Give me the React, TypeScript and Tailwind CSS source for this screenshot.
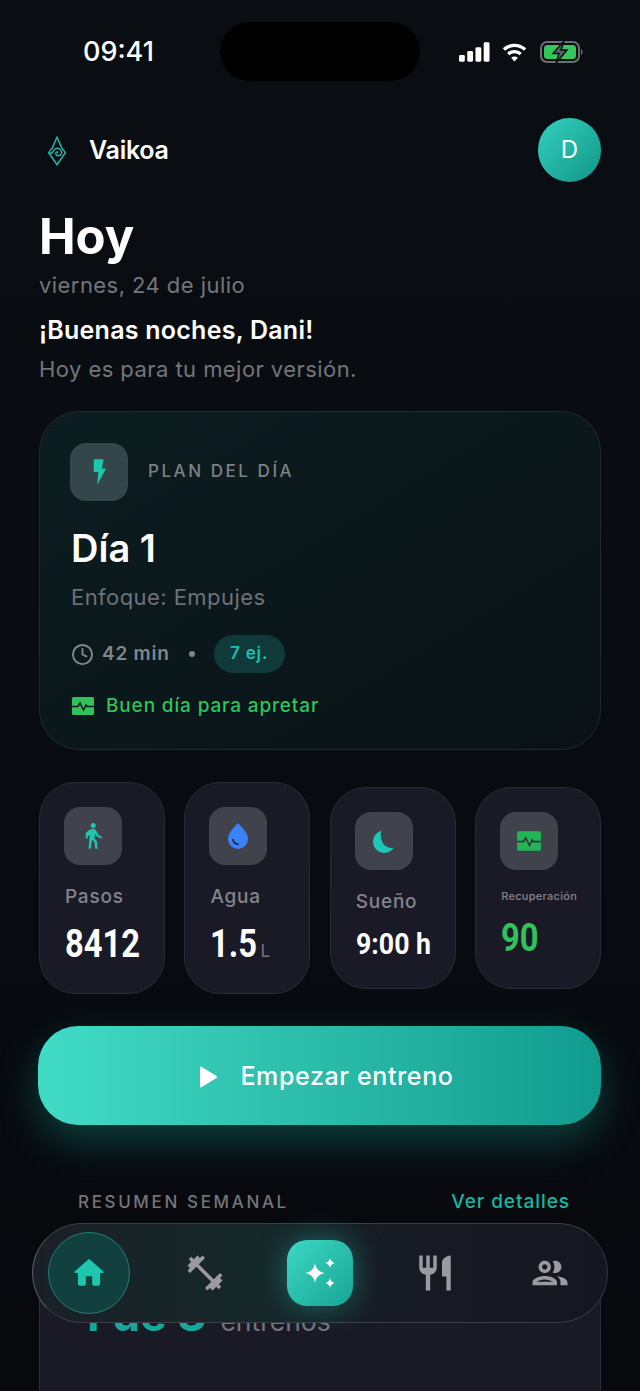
import { Clock } from "lucide-react";

const inter = "font-['Inter',sans-serif]";

const BoltIcon = ({ className }: { className?: string }) => (
	<svg viewBox="0 0 24 24" className={className} fill="currentColor">
		<path d="M7.500 1h8.500l-1.500 8h3.500L10.500 23l1-11H7.500z" />
	</svg>
);

const PulseIcon = ({ className, line = "#0d2024" }: { className?: string; line?: string }) => (
	<svg viewBox="0 0 24 24" className={className}>
		<rect x="1" y="3" width="22" height="18" rx="1.500" fill="currentColor" />
		<path d="M1 12.500h6l2-3.500 3.500 7 2.500-5 1 1.500h7" fill="none" stroke={line} strokeWidth="1.600" />
	</svg>
);

const Logo = () => (
	<svg viewBox="0 0 24 36" className="h-[30px] w-[20px] text-[#1cb8a8]" fill="none" stroke="currentColor" strokeWidth="1.800">
		<path d="M12 1.500L17.500 14 22 20 12 34.500 2 20 6.500 14z" />
		<path d="M2 20c3 1.500 5 .5 6-2.500 1-2.500 4.500-3.500 7-2 3 1.500 3.500 5.500 1 7.500-2.500 1.500-5.500.5-5.500-2 0-1.500 1.800-2.300 3-1.300" />
	</svg>
);

const WalkIcon = () => (
	<svg viewBox="0 0 24 24" className="-translate-x-[1px] h-[30px] w-[30px] text-[#1cc7ae]" fill="currentColor">
		<circle cx="13" cy="3.500" r="2" />
		<path d="M10 7l3-1 2 1 2 4 3 1.500-.6 1.400-3.700-1.800-1.200-2-.6 3.800 2 2.200.6 6h-1.900l-.6-5.200-2-2-1 7.200H9.200l1-11-1.600.9V14H7V9.600z" />
	</svg>
);

const DropIcon = () => (
	<svg viewBox="0 0 24 24" className="h-[30px] w-[30px]">
		<path d="M12 1.500c4 4.600 8 8 8 12.900a8 8 0 0 1-16 0C4 9.500 8 6.100 12 1.500z" fill="#3b82f6" />
		<path d="M8 15c.4 2 1.800 3.300 4 3.600" fill="none" stroke="#1c1f33" strokeWidth="1.300" strokeLinecap="round" />
	</svg>
);

const MoonIcon = () => (
	<svg viewBox="0 0 24 24" className="-translate-x-[1px] h-[27px] w-[27px] text-[#1cc7b5]" fill="currentColor">
		<path d="M11 2.500A10 10 0 1 0 22 17.500C15 19 8.500 12 11 2.500z" />
	</svg>
);

const HomeIcon = () => (
	<svg viewBox="0 0 24 24" className="h-[38px] w-[38px] text-[#1cc7ae]" fill="currentColor">
		<path d="M10 19v-5h4v5c0 .55.45 1 1 1h3c.55 0 1-.45 1-1v-7h1.700c.46 0 .68-.57.33-.87L12.670 3.600c-.38-.34-.96-.34-1.340 0l-8.360 7.530c-.34.3-.13.87.33.87H5v7c0 .55.45 1 1 1h3c.55 0 1-.45 1-1z" />
	</svg>
);

const DumbbellIcon = () => (
	<svg viewBox="0 0 24 24" className="h-[42px] w-[42px] text-[#9a9aa0]" fill="currentColor">
		<path d="M20.570 14.860L22 13.430 20.570 12 17 15.570 8.430 7 12 3.430 10.570 2 9.140 3.430 7.710 2 5.570 4.140 4.140 2.710 2.710 4.140l1.430 1.430L2 7.710l1.430 1.430L2 10.570 3.430 12 7 8.430 15.570 17 12 20.570 13.430 22l1.430-1.430L16.290 22l2.140-2.140 1.430 1.430 1.430-1.430-1.430-1.430L22 16.290z" />
	</svg>
);

const ForkKnifeIcon = () => (
	<svg viewBox="0 0 24 24" className="h-[42px] w-[42px] text-[#9a9aa0]" fill="currentColor">
		<path d="M11 9H9V2H7v7H5V2H3v7c0 2.120 1.660 3.840 3.750 3.970V22h2.500v-9.030C11.340 12.840 13 11.120 13 9V2h-2v7zm5-3v8h2.500v8H21V2c-2.760 0-5 2.240-5 4z" />
	</svg>
);

const PeopleIcon = () => (
	<svg viewBox="0 0 24 24" className="h-[42px] w-[42px] text-[#9a9aa0]" fill="currentColor">
		<path d="M9 13.750c-2.340 0-7 1.170-7 3.500V19h14v-1.750c0-2.330-4.660-3.500-7-3.500zM4.340 17c.84-.58 2.870-1.250 4.660-1.250s3.820.67 4.660 1.250H4.340zM9 12c1.930 0 3.500-1.570 3.500-3.500S10.930 5 9 5 5.500 6.570 5.500 8.500 7.070 12 9 12zm0-5c.83 0 1.500.67 1.500 1.500S9.830 10 9 10s-1.500-.67-1.500-1.500S8.170 7 9 7zm7.040 6.810c1.160.84 1.960 1.960 1.960 3.440V19h4v-1.750c0-2.020-3.500-3.170-5.960-3.440zM15 12c1.930 0 3.500-1.570 3.500-3.500S16.930 5 15 5c-.54 0-1.040.13-1.500.35.63.89 1 1.980 1 3.150s-.37 2.260-1 3.150c.46.22.96.35 1.500.35z" />
	</svg>
);

const SparkIcon = () => (
	<svg viewBox="0 0 36 36" className="h-[36px] w-[36px] text-white" fill="currentColor">
		<path d="M13 8.500Q14.500 16.500 22.500 18 14.500 19.500 13 27.500 11.500 19.500 3.500 18 11.500 16.500 13 8.500z" />
		<path d="M28 3Q28.800 7.200 33 8 28.800 8.800 28 13 27.200 8.800 23 8 27.200 7.200 28 3z" />
		<path d="M28 23Q28.800 27.200 33 28 28.800 28.800 28 33 27.200 28.800 23 28 27.200 27.200 28 23z" />
	</svg>
);

const StatCard = ({
	icon,
	label,
	labelClass,
	valueClass,
	children,
	tall,
}: {
	icon: React.ReactNode;
	label: string;
	labelClass: string;
	valueClass: string;
	children: React.ReactNode;
	tall?: boolean;
}) => (
	<div className={`flex-1 rounded-[36px] border border-[#2a2b36] bg-[#1a1a27] pl-[25px] pt-[24px] ${tall ? "h-[212px]" : "h-[202px]"}`}>
		<div className="-ml-[1px] flex h-[58px] w-[58px] items-center justify-center rounded-[16px] bg-[#40434c]">{icon}</div>
		<div className={`font-medium text-[#84848c] ${labelClass}`}>{label}</div>
		<div className={`flex items-baseline whitespace-nowrap font-['Roboto',sans-serif] font-bold leading-[44px] ${valueClass}`}>{children}</div>
	</div>
);

export default function App() {
	return (
		<div className={`relative h-[1391px] w-[640px] overflow-hidden bg-gradient-to-b from-[#0a0e13] to-[#07090d] text-white ${inter}`}>
			{/* status bar */}
			<div className="flex h-[118px] items-start justify-between px-[83px] pt-[22px]">
				<div className="pt-[13px] text-[27px] font-medium leading-[34px]">09:41</div>
				<div className="absolute left-[220px] top-[22px] h-[59px] w-[200px] rounded-[30px] bg-black" />
				<div className="-mr-[27px] flex items-center pt-[19px]">
					<svg viewBox="0 0 32 20" className="h-[20px] w-[31px] text-white" fill="currentColor">
						<rect x="0" y="13" width="6" height="7" rx="1.500" />
						<rect x="8.500" y="9" width="6" height="11" rx="1.500" />
						<rect x="17" y="5" width="6" height="15" rx="1.500" />
						<rect x="25.500" y="0" width="6" height="20" rx="1.500" />
					</svg>
					<svg viewBox="0 0 26 20" className="ml-[12px] h-[20px] w-[25px] text-white" fill="none" stroke="currentColor" strokeWidth="3.500">
						<path d="M2 7.500a16 16 0 0 1 22 0" />
						<path d="M6.500 12a10 10 0 0 1 13 0" />
						<path d="M13 20l-3.500-4a5 5 0 0 1 7 0z" fill="currentColor" stroke="none" />
					</svg>
					<svg viewBox="0 0 44 22" className="ml-[13px] h-[22px] w-[44px]">
						<rect x="1" y="1" width="38" height="20" rx="6" fill="none" stroke="#6b6f72" strokeWidth="2" />
						<rect x="4" y="4" width="32" height="14" rx="3.500" fill="#35c759" />
						<path d="M41 8c2 .5 2 5.500 0 6z" fill="#6b6f72" />
						<path d="M24 0L13 12.500h6L16 22l11-13h-6z" fill="#5c6062" stroke="#0a0d12" strokeWidth="1.500" />
					</svg>
				</div>
			</div>

			<div className="px-[39px]">
				{/* header */}
				<div className="flex h-[64px] items-center justify-between">
					<div className="flex items-center gap-[22px] pl-[8px] pt-[1px]">
						<Logo />
						<span className="text-[25px] font-semibold tracking-[-0.01em]">Vaikoa</span>
					</div>
					<div className="flex h-[64px] w-[63px] items-center justify-center rounded-full bg-gradient-to-br from-[#34d1bf] to-[#0f9688] text-[24px] font-normal">
						D
					</div>
				</div>

				<h1 className="mt-[26px] text-[49px] font-bold leading-[58px]">Hoy</h1>
				<p className="mt-[5px] text-[22px] leading-[28px] tracking-[0.02em] text-[#74757a]">viernes, 24 de julio</p>
				<p className="mt-[16px] text-[25px] font-semibold leading-[30px] tracking-[0.01em]">¡Buenas noches, Dani!</p>
				<p className="mt-[10px] text-[22px] leading-[28px] tracking-[0.02em] text-[#74757a]">Hoy es para tu mejor versión.</p>

				{/* plan card */}
				<div className="mt-[28px] h-[339px] rounded-[40px] border border-[#1d2b2e] bg-gradient-to-br from-[#0b1d20] to-[#0a1216] pl-[30px] pt-[31px]">
					<div className="flex items-center gap-[20px]">
						<div className="flex h-[58px] w-[58px] items-center justify-center rounded-[16px] bg-[#33474a]">
							<BoltIcon className="h-[28px] w-[28px] text-[#1cc7ae]" />
						</div>
						<span className="text-[17px] font-medium tracking-[0.15em] text-[#7d8184]">PLAN DEL DÍA</span>
					</div>
					<h2 className="mt-[23px] pl-[1px] text-[38px] font-semibold leading-[48px]">Día 1</h2>
					<p className="mt-[11px] pl-[1px] text-[22px] leading-[28px] tracking-[0.02em] text-[#6d7276]">Enfoque: Empujes</p>
					<div className="mt-[24px] flex h-[38px] items-center pl-[1px] text-[#82868a]">
						<Clock className="h-[23px] w-[23px]" strokeWidth={2} />
						<span className="ml-[8px] text-[19px] font-semibold tracking-[0.04em]">42 min</span>
						<span className="ml-[19px] h-[6px] w-[6px] rounded-full bg-[#82868a]" />
						<span className="ml-[19px] flex h-[38px] w-[71px] items-center justify-center rounded-full bg-[#10393a] text-[17px] font-semibold tracking-[0.05em] text-[#1cc0ae]">
							7 ej.
						</span>
					</div>
					<div className="mt-[20px] flex items-center gap-[11px] pl-[1px] text-[#32c15c]">
						<PulseIcon className="h-[24px] w-[24px]" />
						<span className="text-[19px] font-medium leading-[26px] tracking-[0.045em]">Buen día para apretar</span>
					</div>
				</div>

				{/* stats */}
				<div className="mt-[32px] flex h-[212px] items-center gap-[19.5px]">
					<StatCard
						icon={<WalkIcon />}
						label="Pasos"
						tall
						labelClass="mt-[18px] h-[28px] text-[19px] leading-[28px] tracking-[0.04em]"
						valueClass="mt-[11px]"
					>
						<span className="inline-block origin-left scale-x-[0.86] text-[38px]">8412</span>
					</StatCard>
					<StatCard
						icon={<DropIcon />}
						label="Agua"
						tall
						labelClass="mt-[18px] h-[28px] text-[19px] leading-[28px] tracking-[0.04em]"
						valueClass="mt-[11px]"
					>
						<span className="inline-block w-[50px] origin-left scale-x-[0.86] text-[38px]">1.5</span>
						<span className="font-['Inter',sans-serif] text-[17px] font-normal text-[#74757a]">L</span>
					</StatCard>
					<StatCard
						icon={<MoonIcon />}
						label="Sueño"
						labelClass="mt-[18px] h-[28px] text-[19px] leading-[28px] tracking-[0.04em]"
						valueClass="mt-[6px]"
					>
						<span className="inline-block origin-left scale-x-[0.89] text-[30px]">9:00 h</span>
					</StatCard>
					<StatCard
						icon={<PulseIcon className="h-[26px] w-[26px] text-[#22b556]" line="#33383f" />}
						label="Recuperación"
						labelClass="mt-[13px] h-[26px] text-[11px] leading-[26px] tracking-[0.027em]"
						valueClass="mt-[7px]"
					>
						<span className="inline-block origin-left scale-x-[0.86] text-[38px] text-[#32c15c]">90</span>
					</StatCard>
				</div>

				{/* cta */}
				<button className="mt-[32px] flex h-[99px] w-[563px] -translate-x-[1px] items-center justify-center gap-[23px] rounded-[40px] bg-gradient-to-r from-[#41dcc6] to-[#0f9c8e] pl-[14px] pt-[2px] shadow-[0_16px_40px_rgba(24,190,170,0.3)]">
					<svg viewBox="0 0 18 22" className="h-[22px] w-[18px] text-white" fill="currentColor">
						<path d="M1 1.500v19c0 .8.800 1.200 1.400.8L17.500 12c.6-.4.6-1.600 0-2L2.400.7C1.800.3 1 .7 1 1.500z" />
					</svg>
					<span className="text-[25px] font-medium tracking-[0.025em]">Empezar entreno</span>
				</button>

				{/* weekly */}
				<div className="mt-[63px] flex items-center justify-between pl-[39px] pr-[31px]">
					<span className="text-[17px] font-medium tracking-[0.155em] text-[#74757b]">RESUMEN SEMANAL</span>
					<span className="text-[19px] font-medium tracking-[0.05em] text-[#1ab5a3]">Ver detalles</span>
				</div>
				<div className="mt-[24px] h-[300px] rounded-t-[36px] border border-[#2c2d38] bg-[#1a1a27] pl-[47px] pt-[47px]">
					<div className="flex items-baseline gap-[14px]">
						<span className="text-[45px] font-bold leading-[52px] text-[#14a898]">Fue 3</span>
						<span className="text-[26.5px] text-[#74757b]">entrenos</span>
					</div>
				</div>
			</div>

			{/* bottom nav */}
			<div className="absolute left-[32px] top-[1223px] grid h-[100px] w-[576px] grid-cols-5 place-items-center rounded-[50px] border border-[#3c3e47] border-l-[#5a5c62] border-r-[#32333d] bg-[linear-gradient(90deg,#1a2027_0%,#162829_38%,#171b24_62%,#161620_100%)]">
				<div className="-translate-x-[1px] flex h-[82px] w-[82px] items-center justify-center rounded-full border border-[#1f7f76] bg-[#12403f]">
					<HomeIcon />
				</div>
				<DumbbellIcon />
				<div className="flex h-[66px] w-[66px] items-center justify-center rounded-[20px] bg-gradient-to-br from-[#3dd8c4] to-[#14a595] shadow-[0_0_30px_rgba(40,210,190,0.4)]">
					<SparkIcon />
				</div>
				<ForkKnifeIcon />
				<PeopleIcon />
			</div>
		</div>
	);
}
